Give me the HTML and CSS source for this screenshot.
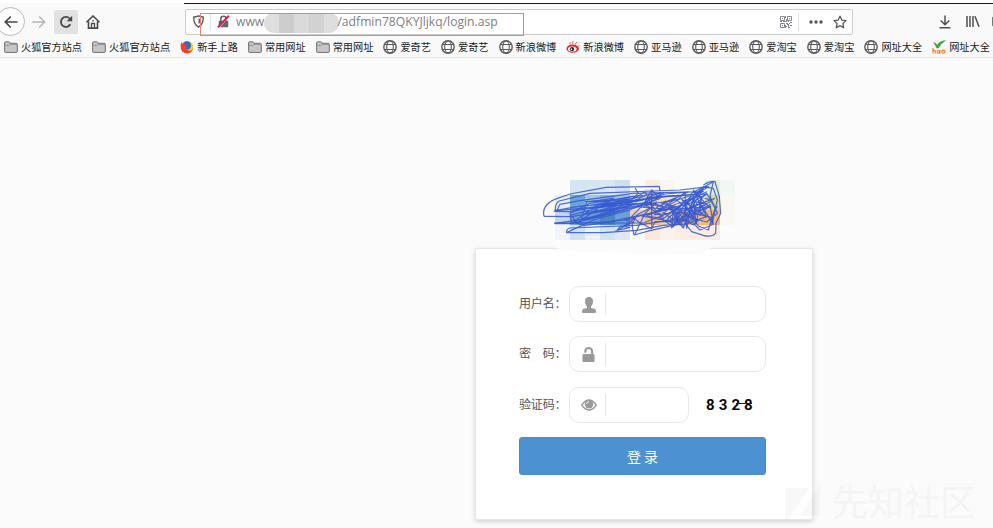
FILE: index.html
```html
<!DOCTYPE html>
<html lang="zh-CN">
<head>
<meta charset="utf-8">
<title>登录</title>
<link rel="stylesheet" href="styles.css">
</head>
<body>
<svg class="defs" aria-hidden="true">
  <symbol id="folder" viewBox="0 0 14 14"><path d="M.6 11.700V2.800q0-1 .9-1h3.200q.7 0 .9.700l.2.800h6.500q1 0 1 1v7.400q0 .7-.8.700h-11q-.9 0-.9-.7z" fill="#c6c6c6" stroke="#707070"/><path d="M1 5.300h4l1-1h7" fill="none" stroke="#858585" stroke-width=".8"/></symbol>
  <symbol id="globe" viewBox="0 0 14 14"><g fill="none" stroke="#5a5a5c" stroke-width="1.100"><circle cx="7" cy="7" r="6.200" stroke-width="1.400"/><ellipse cx="7" cy="7" rx="3.300" ry="6"/><path d="M1.500 4.500h11M1.500 9.500h11"/></g></symbol>
  <symbol id="firefox" viewBox="0 0 14 14"><circle cx="7" cy="7.200" r="6" fill="#ff9416"/><circle cx="6.800" cy="5.400" r="4.200" fill="#1475d4"/><path d="M1.200 2.200Q-.4 8 2.200 11.200q4 4 8.700 1Q13 10.500 13 7q-1.500 3.500-4.500 3.300-2 0-3.200-1.500l2.900-.8q-2.300-.5-2.100-2.200l1.500-1.400Q4.300 4.700 3.800 2.800L2.700 3.900z" fill="#f3402a"/><path d="M9.500.8q2 2.500 1.700 5.500-.5 3-3 4 2.500 1.500 4.300-1.100Q14.300 4.500 9.500.8z" fill="#ffc928"/></symbol>
  <symbol id="weibo" viewBox="0 0 14 14"><ellipse cx="6.700" cy="8.700" rx="6.200" ry="4.100" fill="#e7272d"/><ellipse cx="6.300" cy="9" rx="4.300" ry="2.600" fill="#fff"/><circle cx="6" cy="9.200" r="2.100" fill="#332523"/><circle cx="5.400" cy="9.400" r=".8" fill="#fff"/><path d="M4.300 4.500q-.9-1.200 0-2.400M7 4q-1-1.600.2-3M9.600 4.500q-.5-1.500 1.400-2.300M12 6.800q0-1.300 1.400-1.400" fill="none" stroke="#ef6b65"/></symbol>
  <symbol id="hao" viewBox="0 0 14 14"><path d="M1 2.600Q3.500 2.400 5.200 4.800 8.200.5 14 .3 9.400 3.300 6.500 8.300H4.600Q3.500 5 1 2.600z" fill="#39a935"/><g fill="none" stroke="#f2742b" stroke-width="1.100"><path d="M1 8v5.500M1 11q2-1.600 2.300.3v2.200"/><circle cx="6.400" cy="11.700" r="1.400"/><path d="M7.900 10.200v3.300"/><circle cx="11.400" cy="11.700" r="1.600"/></g></symbol>
</svg>

<header class="chrome">
  <div class="topline"></div>
  <div class="toolbar">
    <span class="back"><svg width="14" height="14" viewBox="0 0 14 14"><path d="M13.500 7H1.500M6.800 1.500 1.300 7l5.500 5.500" fill="none" stroke="#47474a" stroke-width="1.700"/></svg></span>
    <svg class="forward" width="14" height="14" viewBox="0 0 14 14"><path d="M.3 7h12M7.200 1.500 12.700 7l-5.500 5.500" fill="none" stroke="#b5b5b7" stroke-width="1.500"/></svg>
    <span class="reload"><svg width="14" height="14" viewBox="0 0 14 14"><path d="M11.300 9.300A5 5 0 1 1 10.600 3.500L12 5" fill="none" stroke="#47474a" stroke-width="1.800"/><path d="M13.200.8v5.500H7.700z" fill="#47474a"/></svg></span>
    <svg class="home" width="14" height="14" viewBox="0 0 14 14"><path d="M.5 7.300 7 1l6.500 6.300M2.500 6.500v6.600h9V6.500" fill="none" stroke="#47474a" stroke-width="1.600"/><path d="M5.500 13V8.500h3V13" fill="none" stroke="#47474a" stroke-width="1.300"/><path d="M6.300 5h1.400v1.600H6.300z" fill="#47474a"/></svg>
    <div class="urlbar">
      <svg class="shield" width="11" height="13" viewBox="0 0 11 13"><path d="M5.500.8Q8 2 10.200 2q.3 7.500-4.700 10Q.5 9.500.8 2 3 2 5.500.8z" fill="none" stroke="#5a5a5c" stroke-width="1.400"/><path d="M5.600 3.300Q7 3.900 8 3.900q0 3.800-2.400 5.500z" fill="#5a5a5c"/></svg>
      <span class="sep"></span>
      <svg class="insecure" width="13" height="13" viewBox="0 0 13 13"><path d="M3.800 6V3.800q0-2.500 2.700-2.500t2.700 2.500V6" fill="none" stroke="#66666a" stroke-width="1.600"/><rect x="1.700" y="5.800" width="9.600" height="6.500" rx="1" fill="#66666a"/><path d="M2 12.800 12.600 1.200" stroke="#fff" stroke-width="1"/><path d="M.9 12.400 11.800.7" stroke="#f0144b" stroke-width="2"/></svg>
      <span class="url">www.<i class="redact"><b></b><b></b><b></b><b></b><b></b></i>/adfmin78QKYJljkq/login.asp</span>
      <span class="mark"></span>
      <svg class="qr" width="12" height="12" viewBox="0 0 12 12" fill="none" stroke="#858790"><path d="M.5.500h4v4h-4zM7.500.500h4v4h-4zM.5 7.500h4v4h-4z"/><path d="M2 2.500h1M9 2.500h1M2 9.500h1M5.500 0v2M6.500 3v3M0 5.500h2M3 5.500h3M8 5.500h1M10 6.500h2M6 7.500h2M9 7.500h1M7 8.500h2M10 9.500h2M6 10.500h1M8 11.500h2M8.500 9v2M5.500 9v3"/></svg>
      <span class="sep right"></span>
      <svg class="dots" width="14" height="4" viewBox="0 0 14 4" fill="#565659"><circle cx="2" cy="2" r="1.700"/><circle cx="7" cy="2" r="1.700"/><circle cx="12" cy="2" r="1.700"/></svg>
      <svg width="14" height="14" viewBox="0 0 14 14"><path d="m7 1.200 1.800 3.900 4.200.5-3.100 2.900.8 4.200L7 10.600l-3.700 2.100.8-4.200L1 5.600l4.200-.5z" fill="none" stroke="#565659" stroke-width="1.300" stroke-linejoin="round"/></svg>
    </div>
    <svg class="download" width="12" height="14" viewBox="0 0 12 14"><path d="M6 .5v9M1.700 5.500 6 9.800l4.300-4.300M.5 12.800h11" fill="none" stroke="#505053" stroke-width="1.500"/></svg>
    <svg class="library" width="14" height="13" viewBox="0 0 14 13"><path d="M1 1v11M4 1v11M7 1v11M9 1.200l4 10.500" fill="none" stroke="#505053" stroke-width="1.500"/></svg>
    <span class="sidebar"></span>
  </div>
  <nav class="bookmarks">
    <a><svg><use href="#folder"/></svg>火狐官方站点</a>
    <a><svg><use href="#folder"/></svg>火狐官方站点</a>
    <a><svg><use href="#firefox"/></svg>新手上路</a>
    <a><svg><use href="#folder"/></svg>常用网址</a>
    <a><svg><use href="#folder"/></svg>常用网址</a>
    <a><svg><use href="#globe"/></svg>爱奇艺</a>
    <a><svg><use href="#globe"/></svg>爱奇艺</a>
    <a><svg><use href="#globe"/></svg>新浪微博</a>
    <a><svg><use href="#weibo"/></svg>新浪微博</a>
    <a><svg><use href="#globe"/></svg>亚马逊</a>
    <a><svg><use href="#globe"/></svg>亚马逊</a>
    <a><svg><use href="#globe"/></svg>爱淘宝</a>
    <a><svg><use href="#globe"/></svg>爱淘宝</a>
    <a><svg><use href="#globe"/></svg>网址大全</a>
    <a><svg><use href="#hao"/></svg>网址大全</a>
  </nav>
</header>

<main class="page">
  <svg class="logo" width="220" height="80" viewBox="0 0 220 80">
    <path d="M20 65h167v6q-8 2-15 7-10 3-32 1l-80-2q-28 0-40-7z" fill="#fbfbfb"/>
    <g shape-rendering="crispEdges">
      <path d="M40 5h15v15H40zM55 5h15v15H55z" fill="#d5e5f2"/><path d="M70 5h15v15H70z" fill="#d9e8f4"/><path d="M85 5h15v15H85z" fill="#cde0f1"/><path d="M115 5h15v15h-15z" fill="#fdeedb"/><path d="M130 5h15v15h-15z" fill="#fcf6ee"/><path d="M175 5h15v15h-15z" fill="#e0efdd"/><path d="M190 5h15v15h-15z" fill="#f3f7f1"/>
      <path d="M25 20h15v15H25z" fill="#e8eef6"/><path d="M40 20h15v15H40z" fill="#6ca6d2"/><path d="M55 20h15v15H55z" fill="#a2c5e5"/><path d="M70 20h15v15H70z" fill="#89b1df"/><path d="M85 20h15v15H85z" fill="#9fc2e5"/><path d="M100 20h15v15h-15z" fill="#e4ebf4"/><path d="M115 20h15v15h-15z" fill="#fbd69d"/><path d="M130 20h15v15h-15z" fill="#fbdfb5"/><path d="M145 20h30v15h-30z" fill="#f7eee6"/><path d="M175 20h15v15h-15z" fill="#e1d994"/><path d="M190 20h15v15h-15z" fill="#f6f8f1"/>
      <path d="M25 35h15v15H25z" fill="#c5d6e9"/><path d="M40 35h15v15H40z" fill="#77a5d1"/><path d="M55 35h15v15H55z" fill="#679bcf"/><path d="M70 35h15v15H70z" fill="#4f87bf"/><path d="M85 35h15v15H85z" fill="#6e9fd1"/><path d="M100 35h15v15h-15z" fill="#e8cdc0"/><path d="M115 35h15v15h-15z" fill="#f7bd82"/><path d="M130 35h15v15h-15z" fill="#f8cfa6"/><path d="M145 35h15v15h-15z" fill="#f4b484"/><path d="M160 35h30v15h-30z" fill="#f8b878"/><path d="M190 35h15v15h-15z" fill="#fbf7f5"/>
      <path d="M25 50h15v15H25z" fill="#f1f5f9"/><path d="M40 50h15v15H40z" fill="#d2e1ef"/><path d="M55 50h15v15H55z" fill="#e9f1f8"/><path d="M70 50h15v15H70z" fill="#d4e3f2"/><path d="M85 50h15v15H85z" fill="#dfe9f3"/><path d="M115 50h15v15h-15z" fill="#fce9dc"/><path d="M130 50h15v15h-15z" fill="#fdf2eb"/><path d="M145 50h45v15h-45z" fill="#fbece4"/>
    </g>
    <g transform="scale(.33333) translate(0 -15)" fill="none" stroke="#375ad0" stroke-width="3.600" stroke-linejoin="round" stroke-opacity=".88">
      <path d="M42 139Q34 107 74 88L120 72 228 52 388 49 391 68 330 92 140 110 75 122Q76 98 88 93L180 70 450 60 535 50 500 72 350 85 120 125 72 124"/>
      <path d="M42 139 125 140 250 118 440 90 520 65 310 70 150 92 90 103 80 122 210 110 400 80 530 72 480 100 360 130 240 155 120 160 74 160 180 145 340 102"/>
      <path d="M74 159H340L440 120 320 110 210 140 125 160 120 130 180 100 320 78 400 70 300 120 190 150 110 188 220 188 320 181 400 166 470 162 530 140"/>
      <path d="M110 188Q108 177 120 174L320 166 450 145 540 110 400 120 280 150 160 167 130 155 205 105 345 78 280 105 200 140 155 145 170 96 250 85 190 125 140 160 125 135 220 110 320 100 240 125 160 148"/>
      <path d="M165 95 300 88 180 115 330 90 200 124 350 98 210 112 310 78 190 105 340 88 170 130 290 110"/>
      <path d="M315 54 325 70 300 92 345 65 368 110 320 135 306 165 312 195 360 182 440 164 500 130 460 115 420 155 375 155 365 176 330 158 305 140 355 88 405 72 465 67 440 93 350 138 400 146 470 90 520 55 482 118 435 165 410 150 460 100 530 65"/>
      <path d="M255 183 300 172 272 168 261 181 310 156 285 150 315 145 270 176M315 192 345 130 380 96 340 110 385 81 365 60 345 95 398 108 373 134 420 130 450 112 395 100 435 85 470 116 455 145 490 165 505 150 470 132 525 102 495 95 460 174 435 145 455 120 420 110 390 143 430 170 450 137"/>
      <path d="M520 45Q543 31 555 35L568 80 572 130 558 160 557 190Q545 203 520 196L485 185 465 160 466 115 485 70 520 50 550 55 562 90 545 165 510 180 485 155 500 100 530 70 555 115 535 180 505 168 475 120 510 58 550 35 540 78 562 130 530 156 470 140 545 92 500 75 470 96 495 130 545 143 562 109"/>
      <path d="M465 66 470 175 490 80 498 162 515 80 510 136 540 103 550 164 520 115 475 155 450 135 485 110 555 85M365 67V170M430 120 425 174 450 131 435 128 460 168 440 143 480 155 430 149"/>
      <path d="M360 104 400 142 340 100 430 114 335 138 440 158 380 112 475 65M405 92 450 165 420 105 500 155 455 88 530 140 490 60 540 115M310 115 390 85 360 82 450 76 390 120 490 84 435 132 520 98"/>
    </g>
  </svg>
  <form class="card">
    <div class="row"><label for="user">用户名：</label><div class="field"><svg width="14" height="16" viewBox="0 0 14 16"><path d="M7 0q4.100 0 4 4.500 0 3.300-2 5.200v1.200l3.500.8q1.500.6 1.500 3 0 1.300-1.300 1.300H1.300Q0 16 0 14.700q0-2.400 1.500-3l3.500-.8V9.700Q3 7.800 3 4.500 2.900 0 7 0z" fill="#999"/></svg><input id="user" type="text"></div></div>
    <div class="row"><label for="pass">密　码：</label><div class="field"><svg width="14" height="16" viewBox="0 0 14 16"><path d="M3.300 5.800V4.500Q3.300 1 6.700 1q3.400 0 3.400 3.500V8" fill="none" stroke="#999" stroke-width="2"/><rect x=".5" y="7" width="12" height="8" rx="1" fill="#999"/></svg><input id="pass" type="password"></div></div>
    <div class="row"><label for="code">验证码：</label><div class="field short"><svg class="eye" width="16" height="12" viewBox="0 0 16 12"><path d="M.7 6Q8-4 15.300 6 8 16 .7 6z" fill="#fff" stroke="#999" stroke-width="1.300"/><circle cx="8" cy="5.300" r="4.200" fill="#999"/><path d="M5.500 5Q5.600 3 8 2.700" fill="none" stroke="#fff"/></svg><input id="code" type="text"></div><span class="captcha">8328</span></div>
    <button type="button">登 录</button>
  </form>
  <div class="watermark"><svg width="37" height="35" viewBox="0 0 37 35"><path d="M0 3h24L3 35H0zM35 0v31H15z" fill="#000"/></svg><span>先知社区</span></div>
</main>
</body>
</html>
```
FILE: styles.css
```css
* { box-sizing: border-box; }
body { margin: 0; height: 528px; overflow: hidden; background: #fbfbfb; font-family: "Noto Sans CJK SC", sans-serif; }
svg { display: block; flex: none; }
.defs { position: absolute; width: 0; height: 0; }

.chrome { height: 58px; background: #f9f9fa; border-bottom: 1px solid #e4e4e5; border-top: 3px solid #fff; }
.topline { height: 1px; margin-left: 184px; background: #17182c; }
.toolbar { display: flex; align-items: center; height: 35px; }
.back { flex: none; width: 29px; height: 29px; margin-left: -4px; border: 1px solid #b9b9bb; border-radius: 50%; background: #fff; display: grid; place-items: center; }
.forward { margin-left: 7px; }
.reload { flex: none; width: 24px; height: 24px; margin-left: 8px; border-radius: 2px; background: #e1e1e2; display: grid; place-items: center; }
.home { margin-left: 8px; }
.urlbar { position: relative; flex: none; display: flex; align-items: center; width: 668px; height: 26px; margin-left: 85px; padding: 0 5px 0 7px; border: 1px solid #ccc; border-radius: 2px; background: #fff; }
.sep { width: 1px; height: 18px; margin-left: 6px; background: #e3e3e4; }
.insecure { margin-left: 6px; }
.url { display: flex; align-items: center; margin-left: 6px; color: #808084; font: 12.15px/20px "Open Sans", sans-serif; white-space: nowrap; }
.redact { display: flex; justify-content: center; width: 75px; height: 20px; margin: 3px -2px 0 -3px; border-radius: 10px; background: #e1e1e2; overflow: hidden; }
.redact b { width: 15px; background: #dededf; }
.redact b:nth-child(2) { background: #cdcdcd; }
.redact b:nth-child(3) { background: #dadada; }
.redact b:nth-child(4) { background: #d2d2d3; }
.mark { position: absolute; left: 14px; top: 3px; width: 324px; height: 23px; border: 1px solid #f47c7c; }
.qr { margin-left: auto; }
.sep.right { margin-left: 6px; }
.dots { margin: 0 10px; }
.download { margin-left: 86px; }
.library { margin-left: 15px; }
.sidebar { flex: none; width: 10px; height: 11px; margin-left: 12px; border: 1px solid #777; border-radius: 2px; }
.bookmarks { display: flex; gap: 10.060px; height: 16px; padding-left: 4px; align-items: center; color: #19191a; font-size: 10.180px; line-height: 16px; white-space: nowrap; }
.bookmarks a { display: flex; align-items: center; gap: 3px; flex: none; }
.bookmarks svg { width: 14px; height: 14px; }

.page { position: relative; height: 470px; padding: 117px 0 0 475px; }
.logo { position: relative; z-index: 1; margin: 0 0 -7px 55px; }
.card { width: 338px; height: 272px; padding: 37px 46px 0 43px; border: 1px solid #e7e7e7; border-radius: 2px; background: #fff; box-shadow: 0 2px 5px rgba(0, 0, 0, .16); }
.row { display: flex; height: 36px; margin-bottom: 14.400px; }
label { flex: none; width: 50px; color: #555; font-size: 12px; line-height: 33px; letter-spacing: -.15px; white-space: nowrap; }
.field { display: flex; align-items: center; width: 197px; height: 36px; padding-left: 12px; border: 1px solid #e8e8e8; border-radius: 10px; flex: none; }
.short { width: 120px; }
.field svg { margin-top: 1px; }
.field .eye { margin-left: -1px; }
input { flex: 1; min-width: 0; height: 22px; margin-left: 9px; padding: 0 6px; border: 0; border-left: 1px solid #e6e6e6; background: none; outline: 0; }
.eye + input { margin-left: 8px; }
.captcha { position: relative; margin-left: 17px; color: #080808; font: 700 15px/36px Roboto, sans-serif; letter-spacing: 4.100px; }
.captcha::after { content: ""; position: absolute; left: 30px; top: 16px; width: 16px; height: 1px; background: #222; }
button { display: block; width: 247px; height: 38px; padding: 0; border: 1px solid #468dcf; border-radius: 3px; background: #4c92d3; color: #fff; font: 14px/36px "Noto Sans CJK SC", sans-serif; }
.watermark { position: absolute; left: 785px; top: 427px; display: flex; align-items: center; gap: 10px; font-size: 36px; line-height: 36px; white-space: nowrap; color: #000; opacity: .022; }
.watermark span { margin-top: -6px; }
```
